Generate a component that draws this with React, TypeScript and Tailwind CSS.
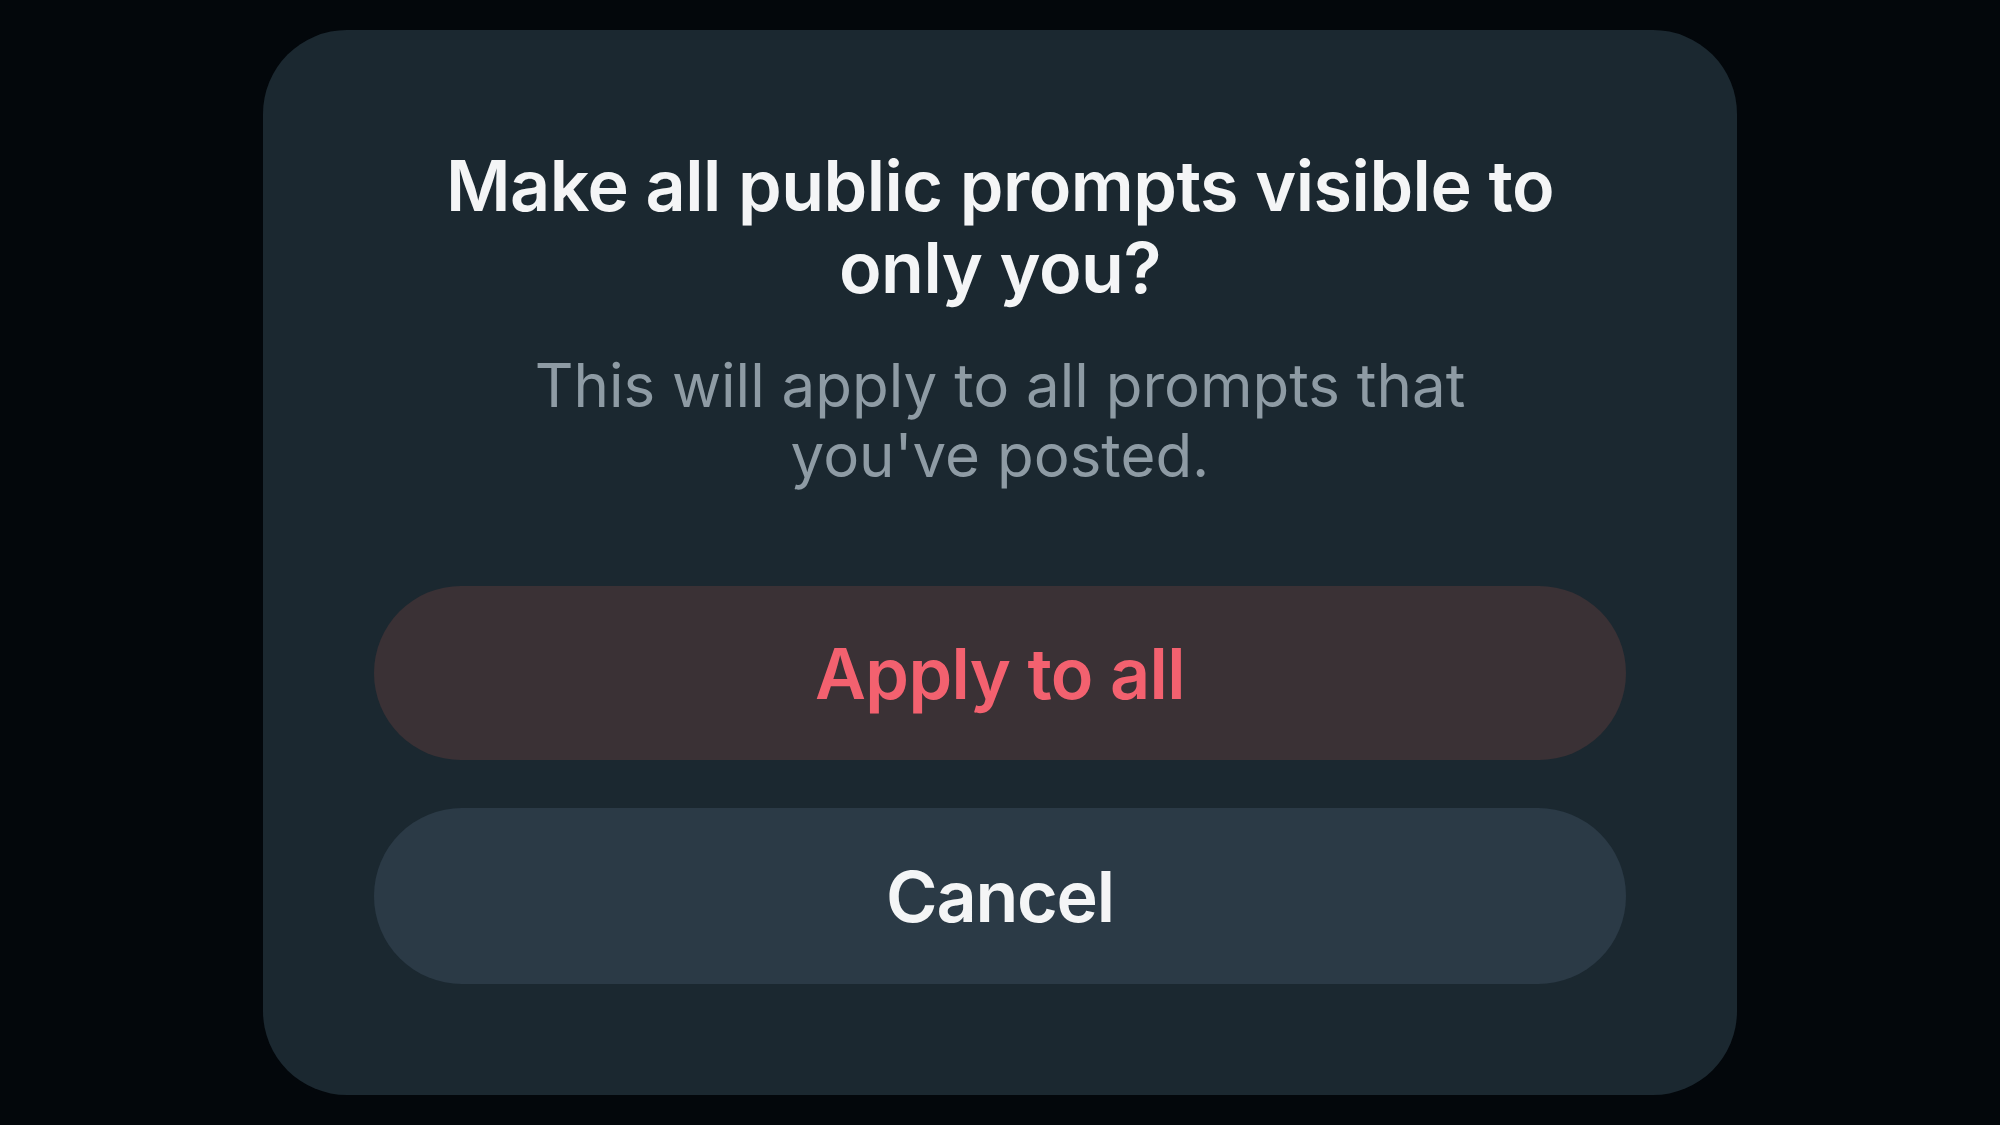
import React from 'react';

export default function App() {
  return (
    <div className="min-h-screen w-full bg-[#03070b] flex items-center justify-center font-['Inter','Noto_Sans',sans-serif]">
      <div
        role="dialog"
        aria-modal="true"
        className="w-[1474px] rounded-[84px] bg-[#1b2830] pt-[115px] pb-[111px] px-[111px] flex flex-col items-center"
      >
        {/* title */}
        <h2 className="text-center text-[70px] leading-[82px] font-semibold text-[#f4f5f6] tracking-[-0.5px]">
          Make all public prompts visible to
          <br />
          only you?
        </h2>
        {/* body */}
        <p className="mt-[41px] text-center text-[60px] leading-[70px] font-normal text-[#8e9ba4]">
          This will apply to all prompts that
          <br />
          you&apos;ve posted.
        </p>
        {/* actions */}
        <div className="mt-[96px] w-full flex flex-col gap-[48px]">
          <button className="w-full h-[174px] rounded-full bg-[#3a3135] text-[#f3616f] text-[70px] font-semibold tracking-[-0.6px]">
            Apply to all
          </button>
          <button className="w-full h-[176px] rounded-full bg-[#2b3a46] text-[#f4f5f6] text-[70px] font-semibold tracking-[-1.2px]">
            Cancel
          </button>
        </div>
      </div>
    </div>
  );
}
